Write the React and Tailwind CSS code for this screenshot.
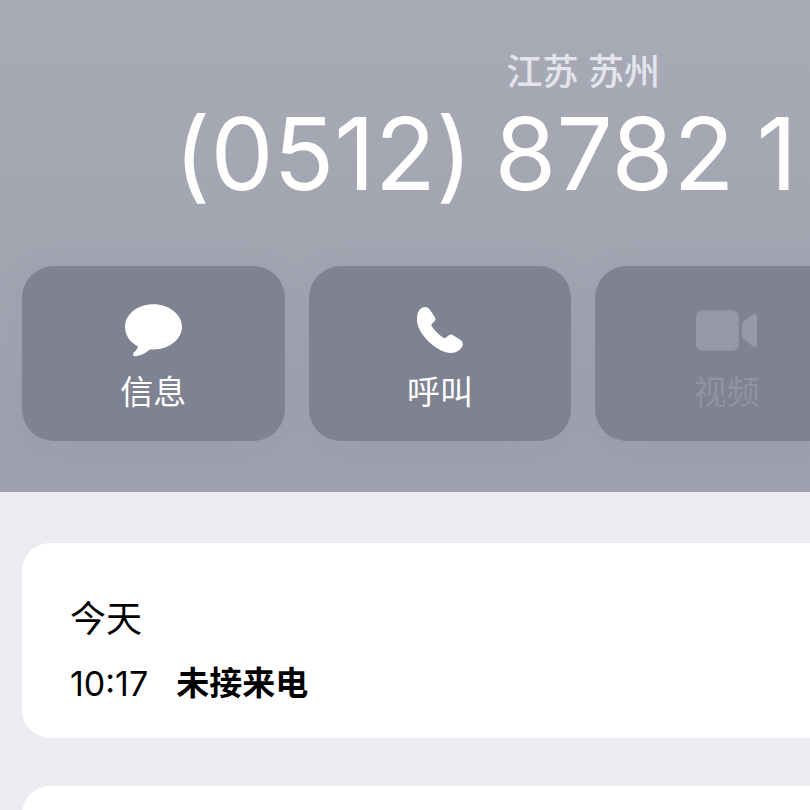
function MessageIcon() {
  return (
    <svg viewBox="0 0 171 158" className="w-[57px] h-[53px]" fill="currentColor" aria-hidden="true">
      <path d="M85 0C132 0 171 30 171 68S132 136 85 136C82 136 79 136 76 135C65 145 49 153 34 156C26 158 21 152 26 146C31 141 37 135 39 127C15 115 0 93 0 68C0 30 38 0 85 0Z" />
    </svg>
  );
}

function PhoneIcon() {
  return (
    <svg viewBox="0 0 139 139" className="w-[46px] h-[46px]" fill="currentColor" aria-hidden="true">
      <path d="M5 13C10 4 17 0 25 0C31 0 35 3 38 7L54 31C57 36 56 40 53 43L46 50C43 53 43 55 45 59C53 71 65 83 78 92C82 95 85 95 88 92L95 86C99 83 104 82 109 85L131 99C137 104 139 109 138 115C137 122 131 129 124 133C110 141 92 141 72 131C42 116 14 87 4 60C-2 42 -2 26 5 13Z" />
    </svg>
  );
}

function VideoIcon() {
  return (
    <svg viewBox="0 0 184 122" className="w-[61px] h-[41px]" fill="currentColor" aria-hidden="true">
      <rect width="129" height="122" rx="20" />
      <path d="M139 43C139 39 140 37 143 34L170 13C177 8 184 10 184 18V102C184 110 177 113 170 108L143 86C140 83 139 81 139 77Z" />
    </svg>
  );
}

const phoneGroups = ['(0512)', '8782', '1'];

const actions = [
  { label: '信息', icon: MessageIcon },
  { label: '呼叫', icon: PhoneIcon },
  { label: '视频', icon: VideoIcon, disabled: true },
];

function ActionButton({ label, icon: Icon, disabled }) {
  return (
    <button
      type="button"
      disabled={disabled}
      className="flex h-[175px] flex-col items-center rounded-[32px] bg-[#7f8291] pt-8 text-white shadow-[0_0_24px_rgba(127,130,145,0.12)] disabled:text-[#9799a7]"
    >
      <span className="flex h-16 items-center justify-center">
        <Icon />
      </span>
      <span className={disabled ? 'text-[33px] leading-[60px] text-[#9193a1]' : 'text-[33px] leading-[60px]'}>
        {label}
      </span>
    </button>
  );
}

export default function App() {
  return (
    <div className="min-h-screen overflow-hidden bg-[#ebebf1] font-['Inter','Noto_Sans_CJK_SC',sans-serif] text-black" lang="zh-CN">
      <header className="bg-linear-to-b from-[#a8aab6] to-[#9d9fac] pt-12 pb-[51px]">
        {/* wider than the window, the last column runs off the right edge */}
        <div className="w-[144%]">
          <p className="text-center text-[36px] leading-[48px] font-medium text-[#e4e5ec]">江苏 苏州</p>
          <h1 className="flex gap-[22px] pl-[174px] text-[100px] leading-[116px] font-normal whitespace-nowrap text-white [font-feature-settings:'calt'_0]">
            {phoneGroups.map((group) => (
              <span key={group}>{group}</span>
            ))}
          </h1>
          <div className="mt-[54px] grid grid-cols-4 gap-6 px-[22px]">
            {actions.map((action) => (
              <ActionButton key={action.label} {...action} />
            ))}
          </div>
        </div>
      </header>

      <main className="flex flex-col gap-12 pt-[51px] pl-[22px]">
        <section className="rounded-l-[28px] bg-white px-12 pt-[51px] pb-[29px]">
          <h2 className="text-[36px] leading-[51px] font-normal">今天</h2>
          <div className="mt-[13px] flex items-center gap-7 text-[34px] leading-[51px]">
            <time>10:17</time>
            <span className="text-[33px] font-bold">未接来电</span>
          </div>
        </section>
        <section className="h-20 rounded-l-[28px] bg-white" />
      </main>
    </div>
  );
}
